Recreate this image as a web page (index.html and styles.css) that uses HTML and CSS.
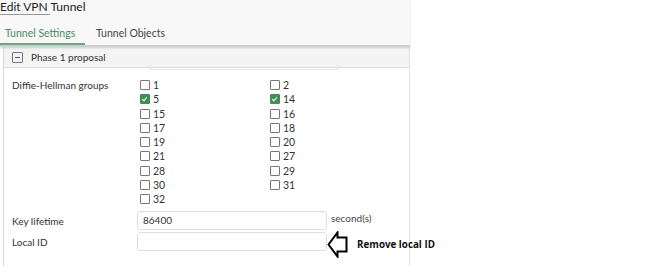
FILE: index.html
```html
<html>
  <head>
    <link rel="stylesheet" href="styles.css">
  </head>
  <body>
    <div class='panel'>
      <div class='topBar'>
        <div class='pageTitle'>Edit VPN Tunnel</div>
        <div class='tabs'>
          <div class='tab tabActive'>Tunnel Settings</div>
          <div class='tab'>Tunnel Objects</div>
        </div>
      </div>
      <div class='section'>
        <div class='sectionHead'>
          <span class='collapseBox'></span>
          <span>Phase 1 proposal</span>
        </div>
        <div class='sectionBody'>
          <div class='cutBox'></div>
          <div class='formRow dhRow'>
            <div class='fieldLabel'>Diffie-Hellman groups</div>
            <div class='dhGrid'>
              <div class='dhItem'><span class='cb'></span>1</div>
              <div class='dhItem'><span class='cb'></span>2</div>
              <div class='dhItem'><span class='cb cbOn'></span>5</div>
              <div class='dhItem'><span class='cb cbOn'></span>14</div>
              <div class='dhItem'><span class='cb'></span>15</div>
              <div class='dhItem'><span class='cb'></span>16</div>
              <div class='dhItem'><span class='cb'></span>17</div>
              <div class='dhItem'><span class='cb'></span>18</div>
              <div class='dhItem'><span class='cb'></span>19</div>
              <div class='dhItem'><span class='cb'></span>20</div>
              <div class='dhItem'><span class='cb'></span>21</div>
              <div class='dhItem'><span class='cb'></span>27</div>
              <div class='dhItem'><span class='cb'></span>28</div>
              <div class='dhItem'><span class='cb'></span>29</div>
              <div class='dhItem'><span class='cb'></span>30</div>
              <div class='dhItem'><span class='cb'></span>31</div>
              <div class='dhItem'><span class='cb'></span>32</div>
            </div>
          </div>
          <div class='formRow inputRow keyRow'>
            <div class='fieldLabel'>Key lifetime</div>
            <div class='textBox'>86400</div>
            <div class='unit'>second(s)</div>
          </div>
          <div class='formRow inputRow'>
            <div class='fieldLabel'>Local ID</div>
            <div class='textBox'></div>
          </div>
        </div>
      </div>
    </div>
    <div class='note'>
      <svg class='arrow' width='21' height='27' viewBox='0 0 21 27'>
        <path d='M1.5 13.5 L10.5 1.5 L10.5 6.5 L19.5 6.5 L19.5 20.5 L10.5 20.5 L10.5 25.5 Z' fill='#fff' stroke='#000' stroke-width='2' stroke-linejoin='miter'/>
      </svg>
      <span class='noteText'>Remove local ID</span>
    </div>
  </body>
</html>
```

FILE: styles.css
```css
body{
  margin: 0;
  width: 650px;
  height: 266px;
  overflow: hidden;
  background-color: #fff;
  font-family: Lato, "Open Sans", sans-serif;
  font-size: 10px;
  color: #333;
  position: relative;
}
.panel{
  width: 410px;
  height: 266px;
  display: flex;
  flex-direction: column;
}
.topBar{
  height: 45px;
  background-color: #f8f8f8;
  border-bottom: 2px solid #cfcfcf;
  box-shadow: 0 1px 2px rgba(0,0,0,0.15);
  position: relative;
  z-index: 1;
}
.pageTitle{
  position: relative;
  height: 16px;
  line-height: 13px;
  font-size: 12px;
  color: #222;
}
.pageTitle::after{
  content: '';
  position: absolute;
  left: 0;
  top: 14px;
  width: 50px;
  height: 1px;
  background-color: #999;
}
.tabs{
  display: flex;
  height: 29px;
}
.tab{
  font-size: 10.5px;
  line-height: 34px;
  color: #444;
  padding: 0 0 0 11px;
}
.tabActive{
  color: #4c8a5c;
  width: 85px;
  padding-left: 5px;
  box-sizing: border-box;
  border-bottom: 2px solid #6aa77a;
}
.section{
  flex: 1;
  margin-left: 3px;
  border-left: 1px solid #d8d8d8;
  border-right: 1px solid #e2e2e2;
  width: 405px;
}
.sectionHead{
  height: 20px;
  background-color: #f4f4f4;
  border-bottom: 1px solid #dcdcdc;
  display: flex;
  align-items: center;
  gap: 8px;
  padding-left: 8px;
  color: #333;
}
.collapseBox{
  width: 9px;
  height: 9px;
  border: 1px solid #777;
  border-radius: 1px;
  position: relative;
}
.collapseBox::after{
  content: '';
  position: absolute;
  left: 2px;
  top: 4px;
  width: 5px;
  height: 1px;
  background-color: #555;
}
.sectionBody{
  position: relative;
  padding-top: 10px;
}
.cutBox{
  position: absolute;
  left: 144px;
  top: -3px;
  width: 190px;
  height: 4px;
  border: 1px solid #e4e4e4;
  border-top: none;
  border-radius: 0 0 4px 4px;
}
.formRow{
  display: flex;
  padding-left: 8px;
}
.fieldLabel{
  width: 128px;
  color: #333;
}
.dhRow .fieldLabel{
  line-height: 14.25px;
}
.dhGrid{
  display: grid;
  grid-template-columns: 130px 130px;
  grid-auto-rows: 14.25px;
}
.dhItem{
  display: flex;
  align-items: center;
  gap: 3px;
  color: #333;
  font-size: 10.5px;
}
.cb{
  width: 8px;
  height: 8px;
  border: 1px solid #777;
  border-radius: 1px;
  background-color: #fff;
  position: relative;
}
.cbOn{
  background-color: #3f8f55;
  border-color: #3f8f55;
}
.cbOn::after{
  content: '';
  position: absolute;
  left: 2px;
  top: 1px;
  width: 2px;
  height: 4px;
  border-right: 1px solid #fff;
  border-bottom: 1px solid #fff;
  transform: rotate(40deg);
}
.inputRow{
  align-items: center;
  height: 21px;
}
.keyRow{
  margin-top: 4px;
}
.inputRow .fieldLabel{
  width: 125px;
}
.textBox{
  width: 183px;
  height: 17px;
  border: 1px solid #dedede;
  border-radius: 3px;
  line-height: 17px;
  padding-left: 5px;
  box-sizing: content-box;
  color: #333;
}
.unit{
  margin-left: 4px;
  margin-top: -5px;
  color: #444;
}
.note{
  position: absolute;
  left: 327px;
  top: 231px;
  display: flex;
  align-items: center;
  gap: 9px;
}
.noteText{
  font-family: "Open Sans", Lato, sans-serif;
  font-weight: bold;
  font-size: 9.8px;
  color: #111;
}
```
